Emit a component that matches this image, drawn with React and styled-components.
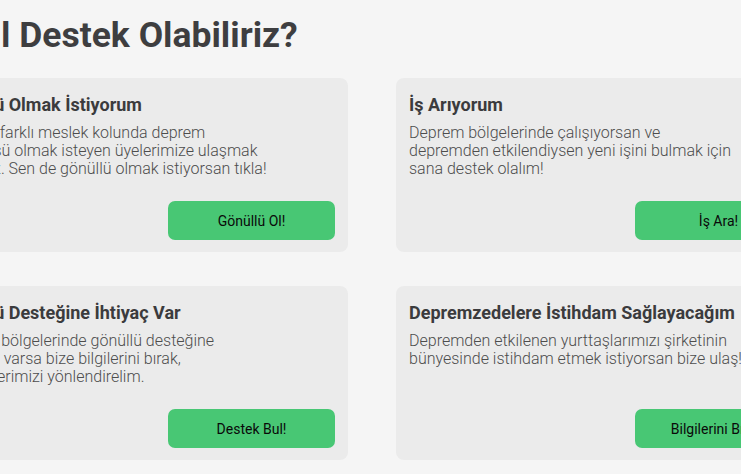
import React from "react";
import styled, { createGlobalStyle } from "styled-components";

const GlobalStyle = createGlobalStyle`
  html, body {
    margin: 0;
    padding: 0;
    background-color: #f5f5f5;
    overflow: hidden;
  }

  body {
    font-family: Roboto, "Noto Sans", sans-serif;
  }
`;

const Page = styled.div`
  display: flex;
  justify-content: center;
  width: 100vw;
  min-height: 100vh;
`;

const Section = styled.section`
  flex-shrink: 0;
  width: 886px;
  margin-left: 3px;
  padding-top: 13px;
`;

const Heading = styled.h1`
  margin: 0 0 21px;
  font-size: 35.5px;
  line-height: 44px;
  font-weight: 700;
  color: #3e3e40;
`;

const Grid = styled.div`
  display: grid;
  grid-template-columns: 419px 419px;
  column-gap: 48px;
  row-gap: 34px;
`;

const Card = styled.div`
  display: flex;
  flex-direction: column;
  height: 174px;
  box-sizing: border-box;
  padding: 16px 13px 12px;
  background-color: #ebebeb;
  border-radius: 8px;
`;

const Title = styled.h3`
  margin: 0 0 8px;
  font-size: 18px;
  line-height: 22px;
  font-weight: 700;
  color: #3b3b3d;
  white-space: nowrap;
`;

const Text = styled.p`
  margin: 0;
  font-size: 16px;
  line-height: 18px;
  font-weight: 300;
  color: #4d4d4d;
  white-space: nowrap;
`;

const Button = styled.button`
  margin-top: auto;
  align-self: flex-end;
  width: 167px;
  height: 39px;
  border: none;
  border-radius: 7px;
  background-color: #48c774;
  color: #0a0a0a;
  font-family: Roboto, sans-serif;
  font-size: 14px;
  font-weight: 400;
  cursor: pointer;
`;

const CARDS = [
  {
    title: "Gönüllü Olmak İstiyorum",
    lines: [
      "Onlarca farklı meslek kolunda deprem",
      "gönüllüsü olmak isteyen üyelerimize ulaşmak",
      "istiyoruz. Sen de gönüllü olmak istiyorsan tıkla!",
    ],
    button: "Gönüllü Ol!",
  },
  {
    title: "İş Arıyorum",
    lines: [
      "Deprem bölgelerinde çalışıyorsan ve",
      "depremden etkilendiysen yeni işini bulmak için",
      "sana destek olalım!",
    ],
    button: "İş Ara!",
  },
  {
    title: "Gönüllü Desteğine İhtiyaç Var",
    lines: [
      "Deprem bölgelerinde gönüllü desteğine",
      "ihtiyacın varsa bize bilgilerini bırak,",
      "gönüllülerimizi yönlendirelim.",
    ],
    button: "Destek Bul!",
  },
  {
    title: "Depremzedelere İstihdam Sağlayacağım",
    lines: [
      "Depremden etkilenen yurttaşlarımızı şirketinin",
      "bünyesinde istihdam etmek istiyorsan bize ulaş!",
    ],
    button: "Bilgilerini Bırak!",
  },
];

const App = () => (
  <>
    <GlobalStyle />
    <Page>
      <Section>
        <Heading>Nasıl Destek Olabiliriz?</Heading>
        <Grid>
          {CARDS.map((card) => (
            <Card key={card.title}>
              <Title>{card.title}</Title>
              <Text>
                {card.lines.map((line, i) => (
                  <React.Fragment key={line}>
                    {i > 0 && <br />}
                    {line}
                  </React.Fragment>
                ))}
              </Text>
              <Button>{card.button}</Button>
            </Card>
          ))}
        </Grid>
      </Section>
    </Page>
  </>
);

export default App;
